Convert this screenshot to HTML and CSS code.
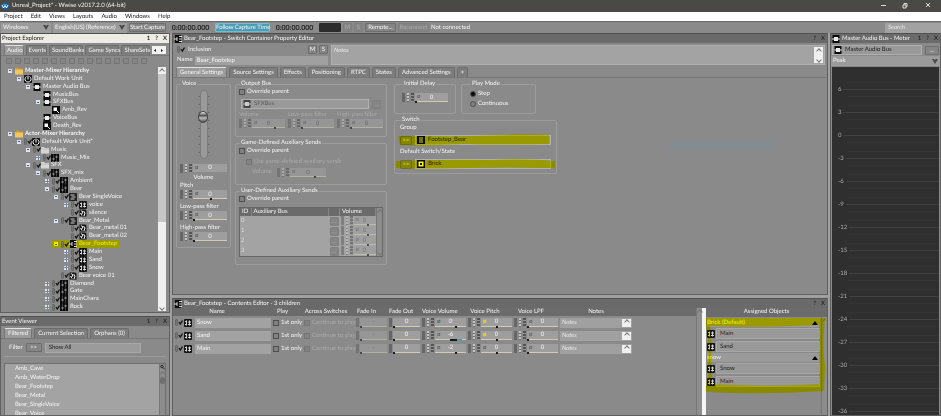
FILE: index.html
```
<!DOCTYPE html>
<html lang="en">

<head>
    <meta charset="UTF-8">
    <meta name="viewport" content="width=device-width, initial-scale=1.0">
    <title>Unreal_Project* - Wwise v2017.2.0 (64-bit)</title>
    <link rel="stylesheet" href="styles.css">
</head>

<body>
    <svg class="sprite" aria-hidden="true">
        <symbol id="logo" viewBox="0 0 16 16"><path d="M8 0l7 4v8l-7 4-7-4V4z" fill="#1761a8"/><path d="M2 6l3 6 3-5 3 5 3-6" fill="none" stroke="#fff" stroke-width="2"/><path d="M5 4l3 3 3-3" fill="none" stroke="#6cc5f5" stroke-width="2"/></symbol>
        <symbol id="folder" viewBox="0 0 16 14"><path d="M0 2l2-2h5l2 2h6v3H0z" fill="#c99a35"/><path d="M0 4h16v10H0z" fill="#efc75e"/></symbol>
        <symbol id="folder-v" viewBox="0 0 16 14"><path d="M0 1h6l2 2h8v11H0z" fill="#d5d5d5"/><path d="M0 5h16" stroke="#aaa"/></symbol>
        <symbol id="unit" viewBox="0 0 16 16"><rect width="16" height="16" rx="2" fill="#111"/><path d="M5 3a6 6 0 1 0 6 0M8 1v8" fill="none" stroke="#fff" stroke-width="2"/></symbol>
        <symbol id="bus" viewBox="0 0 16 16"><path d="M1 0h14v4H1zM1 12h14v4H1zM1 4h3v8H1zM12 4h3v8h-3z" fill="#0b0b0b"/><path d="M0 6h16v4H0z" fill="#888"/><rect x="4" y="4" width="8" height="8" fill="#eee"/></symbol>
        <symbol id="aux" viewBox="0 0 16 16"><rect width="16" height="16" fill="#0b0b0b"/><path d="M3 3h7v7H3z" fill="#fff"/><path d="M9 9l5 5" stroke="#fff" stroke-width="2"/></symbol>
        <symbol id="actor" viewBox="0 0 16 16"><rect width="16" height="16" fill="#0b0b0b"/><path d="M5 1v14M11 1v14" stroke="#777"/><path d="M3 10h4M9 6h4" stroke="#ccc" stroke-width="2"/></symbol>
        <symbol id="rand" viewBox="0 0 16 16"><rect width="16" height="16" rx="2" fill="#161616"/><path d="M5 3v10M11 3v10" fill="none" stroke="#ccc" stroke-width="2"/><path d="M2 5h3M2 11h3M8 6h6M8 11h6" stroke="#ddd" stroke-width="2"/></symbol>
        <symbol id="seq" viewBox="0 0 16 16"><rect width="16" height="16" rx="1" fill="#222"/><path d="M3 4h8M5 8h8M3 12h8" stroke="#ccc" stroke-width="2"/></symbol>
        <symbol id="switch" viewBox="0 0 16 16"><path d="M2 0h12v16H2z" fill="#0b0b0b"/><path d="M0 8h6M6 4v8M10 3h6M10 8h5M10 13h6" stroke="#ddd" stroke-width="2"/></symbol>
        <symbol id="sfx" viewBox="0 0 16 16"><path d="M1 1h12l2 3v11H1z" fill="#151515"/><path d="M4 3l4 3-3 5M9 4l3 4-2 6M3 8l3 5" fill="none" stroke="#fff" stroke-width="2"/></symbol>
        <symbol id="group" viewBox="0 0 16 16"><rect width="16" height="16" fill="#0b0b0b"/><path d="M6 2v12M10 2v12" stroke="#ddd" stroke-width="2"/></symbol>
        <symbol id="state" viewBox="0 0 16 16"><rect width="16" height="16" fill="#0b0b0b"/><path d="M3 3h10v10H3z" fill="#fff"/><path d="M6 6h4v4H6z" fill="#111"/></symbol>
    </svg>

    <div class="title-bar">
        <svg class="icon"><use href="#logo"/></svg>
        <span>Unreal_Project* - Wwise v2017.2.0 (64-bit)</span>
        <svg class="window-buttons" viewBox="0 0 60 12"><path d="M0 5.500h5M22 5h3v3h-3zM23 5V3.500h3v3h-1M45 3l4 4M49 3l-4 4" fill="none" stroke="#ddd"/></svg>
    </div>
    <nav class="menu">
        <a href="#">Project</a><a href="#">Edit</a><a href="#">Views</a><a href="#">Layouts</a><a href="#">Audio</a><a href="#">Windows</a><a href="#">Help</a>
    </nav>
    <div class="toolbar">
        <select class="platform" aria-label="Platform"><option>Windows</option></select>
        <select class="language" aria-label="Language"><option>English(US) (Reference)</option></select>
        <button class="btn capture">Start Capture</button>
        <span class="time">0:00:00.000</span>
        <button class="btn follow">Follow Capture Time</button>
        <span class="time">0:00:00.000</span>
        <span class="screen"></span>
        <button class="btn square" disabled>M</button>
        <button class="btn square" disabled>S</button>
        <button class="btn remote">Remote...</button>
        <button class="btn remote" disabled>Reconnect</button>
        <span>Not connected</span>
        <input class="search" type="text" placeholder="Search" aria-label="Search">
    </div>

    <div class="workspace">
        <div class="left">
            <section class="panel explorer">
                <header class="panel-head active"><span>Project Explorer</span><span class="tools"><b>1</b><b>?</b><b>X</b></span></header>
                <div class="tabs">
                    <button class="tab on">Audio</button><button class="tab">Events</button><button class="tab">SoundBanks</button><button class="tab">Game Syncs</button><button class="tab">ShareSets</button><button class="scroll-tabs" aria-label="Scroll tabs"><svg viewBox="0 0 13 7"><path d="M4 2v3L2 3.500zM9 2v3l2-1.500z" fill="#111"/></svg></button>
                </div>
                <div class="tool-icons"><i></i><i></i><i></i><i></i><i></i><i></i><i></i><i></i><i></i><i></i><i></i><i></i><i></i><i></i><i></i><i></i></div>
                <div class="tree-box">
                    <ul class="tree">
                        <li class="l0 minus root"><svg class="icon"><use href="#folder"/></svg>Master-Mixer Hierarchy</li>
                        <li class="l1 minus"><svg class="icon"><use href="#unit"/></svg>Default Work Unit</li>
                        <li class="l2 minus"><svg class="icon"><use href="#bus"/></svg>Master Audio Bus</li>
                        <li class="l3"><svg class="icon"><use href="#bus"/></svg>MusicBus</li>
                        <li class="l3 minus"><svg class="icon"><use href="#bus"/></svg>SFXBus</li>
                        <li class="l4"><svg class="icon"><use href="#aux"/></svg>Amb_Rev</li>
                        <li class="l3"><svg class="icon"><use href="#bus"/></svg>VoiceBus</li>
                        <li class="l3"><svg class="icon"><use href="#aux"/></svg>Death_Rev</li>
                        <li class="l0 minus root"><svg class="icon"><use href="#folder"/></svg>Actor-Mixer Hierarchy</li>
                        <li class="l1 minus"><input type="checkbox" checked aria-label="Include"><svg class="icon"><use href="#unit"/></svg>Default Work Unit*</li>
                        <li class="l2 minus"><input type="checkbox" checked aria-label="Include"><svg class="icon"><use href="#folder-v"/></svg>Music</li>
                        <li class="l3 plus"><input type="checkbox" checked aria-label="Include"><svg class="icon"><use href="#actor"/></svg>Music_Mix</li>
                        <li class="l2 minus"><input type="checkbox" checked aria-label="Include"><svg class="icon"><use href="#folder-v"/></svg>SFX</li>
                        <li class="l3 minus"><input type="checkbox" checked aria-label="Include"><svg class="icon"><use href="#actor"/></svg>SFX_mix</li>
                        <li class="l4 plus"><input type="checkbox" checked aria-label="Include"><svg class="icon"><use href="#actor"/></svg>Ambient</li>
                        <li class="l4 minus"><input type="checkbox" checked aria-label="Include"><svg class="icon"><use href="#actor"/></svg>Bear</li>
                        <li class="l5 minus"><input type="checkbox" checked aria-label="Include"><svg class="icon"><use href="#seq"/></svg>Bear SingleVoice</li>
                        <li class="l6 plus"><input type="checkbox" checked aria-label="Include"><svg class="icon"><use href="#rand"/></svg>voice</li>
                        <li class="l6"><input type="checkbox" checked aria-label="Include"><svg class="icon"><use href="#sfx"/></svg>silence</li>
                        <li class="l5 minus"><input type="checkbox" checked aria-label="Include"><svg class="icon"><use href="#seq"/></svg>Bear_Metal</li>
                        <li class="l6"><input type="checkbox" checked aria-label="Include"><svg class="icon"><use href="#sfx"/></svg>Bear_metal 01</li>
                        <li class="l6"><input type="checkbox" checked aria-label="Include"><svg class="icon"><use href="#sfx"/></svg>Bear_metal 02</li>
                        <li class="l5 minus marked"><input type="checkbox" checked aria-label="Include"><svg class="icon"><use href="#switch"/></svg>Bear_Footstep</li>
                        <li class="l6 plus"><input type="checkbox" checked aria-label="Include"><svg class="icon"><use href="#rand"/></svg>Main</li>
                        <li class="l6 plus"><input type="checkbox" checked aria-label="Include"><svg class="icon"><use href="#rand"/></svg>Sand</li>
                        <li class="l6 plus"><input type="checkbox" checked aria-label="Include"><svg class="icon"><use href="#rand"/></svg>Snow</li>
                        <li class="l5"><input type="checkbox" checked aria-label="Include"><svg class="icon"><use href="#sfx"/></svg>Bear voice 01</li>
                        <li class="l4 plus"><input type="checkbox" checked aria-label="Include"><svg class="icon"><use href="#actor"/></svg>Diamond</li>
                        <li class="l4 plus"><input type="checkbox" checked aria-label="Include"><svg class="icon"><use href="#actor"/></svg>Gate</li>
                        <li class="l4 plus"><input type="checkbox" checked aria-label="Include"><svg class="icon"><use href="#actor"/></svg>MainChara</li>
                        <li class="l4 plus"><input type="checkbox" checked aria-label="Include"><svg class="icon"><use href="#actor"/></svg>Rock</li>
                    </ul>
                    <div class="scroll light"><span class="arrow up"></span><span class="thumb"></span><span class="arrow down"></span></div>
                </div>
            </section>

            <section class="panel events">
                <header class="panel-head"><span>Event Viewer</span><span class="tools"><b>1</b><b>?</b><b>X</b></span></header>
                <div class="tabs">
                    <button class="tab on">Filtered</button><button class="tab">Current Selection</button><button class="tab">Orphans (0)</button>
                </div>
                <div class="filter">
                    <label for="filter">Filter</label>
                    <button class="btn">&gt;&gt;</button>
                    <input id="filter" type="text" value="Show All">
                </div>
                <div class="event-box">
                    <ul class="event-list">
                        <li>Amb_Cave</li>
                        <li>Amb_WaterDrop</li>
                        <li>Bear_Footstep</li>
                        <li>Bear_Metal</li>
                        <li>Bear_SingleVoice</li>
                        <li>Bear_Voice</li>
                    </ul>
                    <div class="scroll dark"><svg class="find" viewBox="0 0 6 6"><circle cx="2.500" cy="2.500" r="1.500" fill="none" stroke="#111"/><path d="M4 4l2 2" stroke="#111"/></svg><span class="arrow up"></span><span class="thumb"></span></div>
                </div>
            </section>
        </div>

        <div class="middle">
            <section class="panel property">
                <header class="panel-head"><svg class="icon"><use href="#switch"/></svg><span>Bear_Footstep - Switch Container Property Editor</span><span class="tools"><b>?</b><b>X</b></span></header>
                <div class="identity">
                    <div class="naming">
                        <div class="line">
                            <label class="check"><input type="checkbox" checked>Inclusion</label>
                            <button class="btn square push">M</button>
                            <button class="btn square">S</button>
                        </div>
                        <div class="line">
                            <label for="name">Name</label>
                            <input id="name" type="text" value="Bear_Footstep">
                        </div>
                    </div>
                    <div class="notes">
                        <textarea placeholder="Notes" aria-label="Notes"></textarea>
                        <div class="spin"><span class="arrow up"></span><span class="arrow down"></span></div>
                    </div>
                </div>
                <div class="tabs">
                    <button class="tab on">General Settings</button><button class="tab">Source Settings</button><button class="tab">Effects</button><button class="tab">Positioning</button><button class="tab">RTPC</button><button class="tab">States</button><button class="tab">Advanced Settings</button><button class="tab">+</button>
                </div>
                <div class="settings">
                    <fieldset class="voice">
                        <legend>Voice</legend>
                        <div class="fader"><input type="range" min="0" max="100" value="64" aria-label="Voice volume"></div>
                        <span class="num first"><input id="volume" type="text" value="0"></span>
                        <label class="centered" for="volume">Volume</label>
                        <label for="pitch">Pitch</label>
                        <span class="num bar mid"><input id="pitch" type="text" value="0"></span>
                        <label for="lpf">Low-pass filter</label>
                        <span class="num bar"><input id="lpf" type="text" value="0"></span>
                        <label for="hpf">High-pass filter</label>
                        <span class="num bar"><input id="hpf" type="text" value="0"></span>
                    </fieldset>
                    <div class="sends">
                        <fieldset class="output">
                            <legend>Output Bus</legend>
                            <label class="check"><input type="checkbox">Override parent</label>
                            <div class="object dim"><span class="object-name"><svg class="icon"><use href="#bus"/></svg><input type="text" value="SFXBus" aria-label="Output bus" disabled></span><button class="btn" disabled>...</button></div>
                            <div class="three dim">
                                <label>Volume<span class="num bar far"><input type="text" value="0" disabled></span></label>
                                <label>Low-pass filter<span class="num bar"><input type="text" value="0" disabled></span></label>
                                <label>High-pass filter<span class="num bar"><input type="text" value="0" disabled></span></label>
                            </div>
                        </fieldset>
                        <fieldset class="game">
                            <legend>Game-Defined Auxiliary Sends</legend>
                            <label class="check"><input type="checkbox">Override parent</label>
                            <label class="check nested dim"><input type="checkbox" disabled>Use game-defined auxiliary sends</label>
                            <label class="inline-num dim">Volume<span class="num bar far"><input type="text" value="0" disabled></span></label>
                        </fieldset>
                        <fieldset class="user">
                            <legend>User-Defined Auxiliary Sends</legend>
                            <label class="check"><input type="checkbox">Override parent</label>
                            <div class="aux-box">
                                <table class="aux">
                                    <thead><tr><th class="id">ID</th><th>Auxiliary Bus</th><th class="more"></th><th class="vol">Volume</th></tr></thead>
                                    <tbody>
                                        <tr><td>0</td><td></td><td><button class="btn" disabled>...</button></td><td class="dim"><span class="num bar far"><input type="text" value="0" aria-label="Volume 0" disabled></span></td></tr>
                                        <tr><td>1</td><td></td><td><button class="btn" disabled>...</button></td><td class="dim"><span class="num bar far"><input type="text" value="0" aria-label="Volume 1" disabled></span></td></tr>
                                        <tr><td>2</td><td></td><td><button class="btn" disabled>...</button></td><td class="dim"><span class="num bar far"><input type="text" value="0" aria-label="Volume 2" disabled></span></td></tr>
                                        <tr><td>3</td><td></td><td><button class="btn" disabled>...</button></td><td class="dim"><span class="num bar far"><input type="text" value="0" aria-label="Volume 3" disabled></span></td></tr>
                                    </tbody>
                                </table>
                                <div class="scroll dark"><span class="arrow up"></span><span class="arrow down"></span></div>
                            </div>
                        </fieldset>
                    </div>
                    <div class="playback">
                        <div class="pair">
                            <fieldset class="delay">
                                <legend>Initial Delay</legend>
                                <span class="num bar"><input type="text" value="0" aria-label="Initial delay"></span>
                            </fieldset>
                            <fieldset class="mode">
                                <legend>Play Mode</legend>
                                <label class="check"><input type="radio" name="mode" checked>Step</label>
                                <label class="check"><input type="radio" name="mode">Continuous</label>
                            </fieldset>
                        </div>
                        <fieldset class="switch">
                            <legend>Switch</legend>
                            <label for="group-name">Group</label>
                            <div class="object marker">
                                <button class="btn">&gt;&gt;</button>
                                <span class="object-name"><svg class="icon"><use href="#group"/></svg><input id="group-name" type="text" value="Footstep_Bear"></span>
                                <svg class="ink" viewBox="0 0 160 12" preserveAspectRatio="none"><path d="M2 2Q60 3 110 1Q130 0 154 1V10Q100 11 70 10Q30 12 4 11Z"/></svg>
                            </div>
                            <label for="state-name">Default Switch/State</label>
                            <div class="object marker">
                                <button class="btn">&gt;&gt;</button>
                                <span class="object-name"><svg class="icon"><use href="#state"/></svg><input id="state-name" type="text" value="Brick"></span>
                                <svg class="ink" viewBox="0 0 160 12" preserveAspectRatio="none"><path d="M0 3Q60 1 95 2Q130 0 160 3V10Q110 9 70 10Q30 11 0 10Z"/></svg>
                            </div>
                        </fieldset>
                    </div>
                    <div class="ghost"></div>
                </div>
            </section>

            <section class="panel contents">
                <header class="panel-head"><svg class="icon"><use href="#switch"/></svg><span>Bear_Footstep - Contents Editor - 3 children</span><span class="tools"><b>?</b><b>X</b></span></header>
                <div class="contents-body">
                    <div class="children">
                        <table class="child-table">
                            <thead>
                                <tr><th class="c-name">Name</th><th class="c-play">Play</th><th class="c-across">Across Switches</th><th class="c-fade">Fade In</th><th class="c-fade">Fade Out</th><th class="c-voice">Voice Volume</th><th class="c-voice">Voice Pitch</th><th class="c-voice">Voice LPF</th><th class="c-notes">Notes</th><th></th></tr>
                            </thead>
                            <tbody>
                                <tr>
                                    <td><div class="child"><input type="checkbox" checked aria-label="Include Snow"><svg class="icon"><use href="#rand"/></svg><input type="text" value="Snow" aria-label="Name"></div></td>
                                    <td><label class="check"><input type="checkbox">1st only</label></td>
                                    <td><label class="check dim"><input type="checkbox" disabled>Continue to play</label></td>
                                    <td class="dim"><span class="num short bar"><input type="text" value="-" aria-label="Fade in" disabled></span></td>
                                    <td><span class="num short bar"><input type="text" value="0" aria-label="Fade out"></span></td>
                                    <td><span class="num bar far"><input type="text" value="0" aria-label="Voice volume"></span></td>
                                    <td><span class="num bar mid lit"><input type="text" value="0" aria-label="Voice pitch"></span></td>
                                    <td><span class="num bar"><input type="text" value="0" aria-label="Voice LPF"></span></td>
                                    <td><div class="note"><input type="text" placeholder="Notes" aria-label="Notes"><span class="spin"><span class="arrow up"></span></span></div></td>
                                    <td></td>
                                </tr>
                                <tr>
                                    <td><div class="child"><input type="checkbox" checked aria-label="Include Sand"><svg class="icon"><use href="#rand"/></svg><input type="text" value="Sand" aria-label="Name"></div></td>
                                    <td><label class="check"><input type="checkbox">1st only</label></td>
                                    <td><label class="check dim"><input type="checkbox" disabled>Continue to play</label></td>
                                    <td class="dim"><span class="num short bar"><input type="text" value="-" aria-label="Fade in" disabled></span></td>
                                    <td><span class="num short bar"><input type="text" value="0" aria-label="Fade out"></span></td>
                                    <td><span class="num bar mid blue"><input type="text" value="-6" aria-label="Voice volume"></span></td>
                                    <td><span class="num bar mid lit"><input type="text" value="0" aria-label="Voice pitch"></span></td>
                                    <td><span class="num bar"><input type="text" value="0" aria-label="Voice LPF"></span></td>
                                    <td><div class="note"><input type="text" placeholder="Notes" aria-label="Notes"><span class="spin"><span class="arrow up"></span></span></div></td>
                                    <td></td>
                                </tr>
                                <tr>
                                    <td><div class="child"><input type="checkbox" checked aria-label="Include Main"><svg class="icon"><use href="#rand"/></svg><input type="text" value="Main" aria-label="Name"></div></td>
                                    <td><label class="check"><input type="checkbox">1st only</label></td>
                                    <td><label class="check dim"><input type="checkbox" disabled>Continue to play</label></td>
                                    <td class="dim"><span class="num short bar"><input type="text" value="-" aria-label="Fade in" disabled></span></td>
                                    <td><span class="num short bar"><input type="text" value="0" aria-label="Fade out"></span></td>
                                    <td><span class="num bar far"><input type="text" value="-2" aria-label="Voice volume"></span></td>
                                    <td><span class="num bar mid"><input type="text" value="0" aria-label="Voice pitch"></span></td>
                                    <td><span class="num bar"><input type="text" value="0" aria-label="Voice LPF"></span></td>
                                    <td><div class="note"><input type="text" placeholder="Notes" aria-label="Notes"><span class="spin"><span class="arrow up"></span></span></div></td>
                                    <td></td>
                                </tr>
                            </tbody>
                        </table>
                        <div class="scroll dark"><span class="arrow up"></span></div>
                    </div>
                    <div class="assigned">
                        <h2>Assigned Objects</h2>
                        <div class="assigned-body">
                            <div class="assigned-list">
                                <h3>Brick (Default)<svg viewBox="0 0 6 4"><path d="M0 4l3-4 3 4z"/></svg></h3>
                                <div class="assigned-item"><svg class="icon"><use href="#rand"/></svg><span>Main</span></div>
                                <div class="assigned-item"><svg class="icon"><use href="#rand"/></svg><span>Sand</span></div>
                                <h3>snow<svg viewBox="0 0 6 4"><path d="M0 4l3-4 3 4z"/></svg></h3>
                                <div class="assigned-item"><svg class="icon"><use href="#rand"/></svg><span>Snow</span></div>
                                <div class="assigned-item"><svg class="icon"><use href="#rand"/></svg><span>Main</span></div>
                            </div>
                            <div class="scroll dark"><span class="arrow up"></span></div>
                            <svg class="ink" viewBox="0 0 120 80" preserveAspectRatio="none"><path d="M0 1H118Q115 30 118 50L117 75Q60 79 0 76V68Q4 60 2 45Q4 25 0 9ZM4 9Q6 30 5 45L6 68Q60 71 112 68Q113 30 112 8Q50 11 4 9Z" fill-rule="evenodd"/></svg>
                        </div>
                    </div>
                </div>
            </section>
        </div>

        <section class="panel meter">
            <header class="panel-head"><svg class="icon"><use href="#bus"/></svg><span>Master Audio Bus - Meter</span><span class="tools"><b>1</b><b>?</b><b>X</b></span></header>
            <div class="object"><span class="object-name"><svg class="icon"><use href="#bus"/></svg><input type="text" value="Master Audio Bus" aria-label="Metered bus"></span><button class="btn">...</button></div>
            <select aria-label="Meter type"><option>Peak</option></select>
            <div class="scale">
                <span>6</span><span>3</span><span>0</span><span>-3</span><span>-6</span><span>-9</span><span>-12</span><span>-15</span><span>-18</span><span>-21</span><span>-24</span><span>-27</span><span>-30</span><span>-33</span><span>-36</span>
            </div>
        </section>
    </div>
</body>

</html>
```

FILE: styles.css
```
* {
    margin: 0;
    padding: 0;
    box-sizing: border-box;
}

body {
    display: flex;
    flex-direction: column;
    height: 100vh;
    overflow: hidden;
    background: #8a8a8a;
    color: #f4f4f4;
    font: 6px/8px Lato, "Liberation Sans", sans-serif;
    text-rendering: geometricPrecision;
}

input,
select,
textarea,
button {
    font: inherit;
    color: inherit;
    text-rendering: inherit;
    border: none;
    outline: none;
    min-width: 0;
}

.sprite {
    position: absolute;
    width: 0;
    height: 0;
}

.icon {
    width: 8px;
    height: 8px;
    flex: none;
}

/* window chrome */
.title-bar {
    display: flex;
    align-items: center;
    gap: 3px;
    height: 12px;
    padding-left: 1px;
    background: #4b4946;
    flex: none;
}

.window-buttons {
    width: 60px;
    height: 12px;
    margin-left: auto;
}

.menu {
    display: flex;
    align-items: center;
    gap: 8px;
    height: 9px;
    padding-left: 4px;
    background: #fff;
    flex: none;
}

.menu a {
    color: #222;
    text-decoration: none;
}

.toolbar {
    display: flex;
    align-items: center;
    gap: 2px;
    height: 12px;
    padding-left: 1px;
    border-top: 1px solid #6b6b6b;
    flex: none;
}

select {
    appearance: none;
    height: 10px;
    padding: 0 2px;
    background: url("data:image/svg+xml,%3Csvg xmlns='http://www.w3.org/2000/svg' viewBox='0 0 6 5'%3E%3Cpath d='M0 0h2l1 1 1-1h2L3 5z' fill='%23484848'/%3E%3C/svg%3E") right 2px center / 6px 5px no-repeat, #9b9b9b;
}

.platform {
    width: 50px;
}

.language {
    width: 74px;
}

.btn {
    height: 9px;
    padding: 0 2px;
    background: #858585;
    border: 1px solid #6e6e6e;
    border-radius: 1px;
    line-height: 7px;
    text-align: center;
    white-space: nowrap;
    flex: none;
}

.btn:disabled {
    color: #aaa;
    border-color: #7f7f7f;
}

.capture {
    width: 37px;
    padding: 0;
}

.follow {
    width: 55px;
    padding: 0;
    background: #4b9db6;
    border-color: #75bace;
}

.square {
    width: 9px;
    padding: 0;
}

.remote {
    width: 31px;
    padding: 0;
}

.time {
    width: 45px;
    color: #222;
    font-size: 7px;
    font-weight: bold;
    text-align: center;
}

.screen {
    width: 22px;
    height: 9px;
    background: #2c2c2c;
    border-radius: 1px;
}

.search {
    width: 56px;
    height: 10px;
    margin-left: auto;
    padding-left: 3px;
    background: #a2a2a2;
}

::placeholder {
    color: #e8e8e8;
    font-style: italic;
}

/* panels */
.workspace {
    display: flex;
    flex: 1;
    gap: 2px;
    min-height: 0;
    background: #a0a0a0;
}

.left {
    display: flex;
    flex-direction: column;
    gap: 3px;
    width: 170px;
    flex: none;
}

.middle {
    display: flex;
    flex-direction: column;
    gap: 3px;
    flex: 1;
    min-width: 0;
}

.panel {
    display: flex;
    flex-direction: column;
    background: #8a8a8a;
    border: 1px solid #606060;
    border-width: 0 1px 1px;
}

.panel-head {
    display: flex;
    align-items: center;
    gap: 2px;
    height: 10px;
    padding: 0 2px 0 1px;
    background: #6a6a6a;
    border-top: 1px solid #505050;
    flex: none;
}

.panel-head.active {
    background: #ecebe4;
    color: #222;
}

.tools {
    display: flex;
    gap: 5px;
    margin-left: auto;
    color: #2b2b2b;
}

.tabs {
    display: flex;
    align-items: flex-end;
    gap: 2px;
    height: 13px;
    padding: 0 3px;
    border-bottom: 1px solid #777;
    flex: none;
}

.tab {
    height: 10px;
    padding: 0 3px;
    background: #7d7d7d;
    border: 1px solid #6c6c6c;
    border-width: 1px 1px 0;
    border-radius: 2px 2px 0 0;
    white-space: nowrap;
}

.explorer .tab {
    padding: 0 2px;
}

.tab.on {
    background: #9b9b9b;
    border-color: #e0e0e0 #777 #777;
}

.scroll-tabs {
    width: 14px;
    height: 8px;
    margin: 0 0 1px auto;
    background: #f2f2f2;
    flex: none;
}

.scroll-tabs svg {
    display: block;
    width: 13px;
    height: 7px;
}

.explorer {
    flex: 1;
    min-height: 0;
}

.tool-icons {
    display: flex;
    gap: 3px;
    height: 10px;
    padding: 2px 5px;
    flex: none;
}

.tool-icons i {
    width: 6px;
    height: 6px;
    background: #858585;
    border: 1px solid #757575;
}

.tree-box {
    display: flex;
    flex: 1;
    min-height: 0;
    padding: 1px 3px 1px 0;
}

.tree {
    display: flex;
    flex-direction: column;
    flex: 1;
    list-style: none;
    min-height: 0;
}

.tree li {
    display: flex;
    align-items: center;
    gap: 2px;
    flex: 1 1 0;
    min-height: 0;
    white-space: nowrap;
}

.tree li::before {
    content: "";
    width: 4px;
    height: 4px;
    margin-right: 1px;
    flex: none;
}

.tree .minus::before,
.tree .plus::before {
    background: linear-gradient(#46598a, #46598a) center / 2px 1px no-repeat, #dfe3ee;
}

.tree .plus::before {
    background: linear-gradient(#7182ac, #7182ac) center / 4px 1px no-repeat, linear-gradient(#7182ac, #7182ac) center / 1px 4px no-repeat, #dfe3ee;
}

.l0 { padding-left: 7px; }
.l1 { padding-left: 16px; }
.l2 { padding-left: 25px; }
.l3 { padding-left: 35px; }
.l4 { padding-left: 44px; }
.l5 { padding-left: 53px; }
.l6 { padding-left: 63px; }

.tree .root {
    font-weight: bold;
}

.tree .marked {
    background: linear-gradient(#9c9b00, #9c9b00) 50px 0 / 69px 100% no-repeat;
    color: #f1f000;
}

.tree .marked::before {
    background-color: #f1f000;
}

/* check boxes with the link handle on their left */
.tree input,
.child input[type="checkbox"],
.identity input[type="checkbox"] {
    appearance: none;
    width: 8px;
    height: 7px;
    margin-right: -2px;
    background: url("data:image/svg+xml,%3Csvg xmlns='http://www.w3.org/2000/svg' viewBox='0 0 8 7'%3E%3Crect x='.5' y='.5' width='2' height='6' rx='1' fill='%23777' stroke='%23555' stroke-width='.6'/%3E%3Cpath d='M4 3l1.300 2L7.500 1.500' fill='none' stroke='%23111' stroke-width='1.300'/%3E%3C/svg%3E") no-repeat;
    flex: none;
}

.identity input[type="checkbox"] {
    margin-right: 1px;
}

.scroll {
    display: flex;
    flex-direction: column;
    align-items: center;
    flex: none;
    width: 8px;
}

.scroll .thumb {
    width: 100%;
    height: 148px;
}

.scroll.light {
    background: #f0f0f0;
}

.scroll.light .thumb {
    background: #c6c6c6;
}

.scroll.dark {
    width: 6px;
    background: #8d8d8d;
    border-left: 1px solid #777;
}

.scroll.dark .thumb {
    height: 7px;
    background: #707070;
    border-radius: 3px;
}

.find {
    width: 5px;
    height: 6px;
    flex: none;
}

.arrow {
    display: flex;
    align-items: center;
    justify-content: center;
    width: 6px;
    height: 7px;
    flex: none;
}

.arrow::before {
    content: "";
    width: 3px;
    height: 3px;
    border: solid #777;
    border-width: 1px 0 0 1px;
    transform: rotate(45deg);
}

.arrow.down {
    margin-top: auto;
}

.arrow.down::before {
    transform: rotate(225deg);
}

/* event viewer */
.events {
    height: 100px;
    flex: none;
}

.filter {
    display: flex;
    align-items: center;
    gap: 3px;
    height: 18px;
    margin: 0 3px;
    padding: 0 5px;
    border-bottom: 1px solid #9b9b9b;
    flex: none;
}

.filter .btn {
    width: 16px;
}

.filter input {
    width: 96px;
    height: 10px;
    padding-left: 3px;
    background: #9b9b9b;
    border: 1px solid #a8a8a8;
    color: #222;
}

.event-box {
    display: flex;
    flex: 1;
    min-height: 0;
    margin: 6px 3px 0;
    background: #a3a3a3;
    border: 1px solid #6e6e6e;
    border-bottom: none;
    overflow: hidden;
}

.event-list {
    flex: 1;
    padding-left: 10px;
    list-style: none;
    line-height: 9px;
}

/* property editor */
.property {
    flex: 1;
    min-height: 0;
}

.identity {
    display: flex;
    gap: 3px;
    height: 22px;
    padding: 2px 2px 0 4px;
    flex: none;
}

.naming {
    display: flex;
    flex-direction: column;
    gap: 1px;
    width: 151px;
}

.line {
    display: flex;
    align-items: center;
    gap: 2px;
    height: 10px;
}

.push {
    margin-left: auto;
}

#name {
    flex: 1;
    height: 9px;
    padding-left: 2px;
    background: #a0a0a0;
}

.notes {
    display: flex;
    flex: 1;
    background: #a3a3a3;
    border: 1px solid #b0b0b0;
}

.notes textarea {
    flex: 1;
    padding: 1px 2px;
    background: none;
    resize: none;
}

.spin {
    display: flex;
    flex-direction: column;
    width: 9px;
    margin: 1px;
    background: #f0f0f0;
}

.spin .arrow {
    width: 9px;
}

.settings {
    position: relative;
    display: flex;
    align-items: flex-start;
    gap: 4px;
    flex: 1;
    min-height: 0;
    margin: 0 1px;
    padding: 2px;
}

fieldset {
    display: flex;
    flex-direction: column;
    min-width: 0;
    padding: 0 3px;
    border: 1px solid #9c9c9c;
    border-radius: 2px;
}

legend {
    margin-left: 1px;
    padding: 0 1px;
}

.check {
    display: flex;
    align-items: center;
    gap: 2px;
    white-space: nowrap;
}

.check input[type="checkbox"]:not(:checked),
.check input[type="radio"] {
    appearance: none;
    width: 6px;
    height: 6px;
    background: #828282;
    border: 1px solid #4f4f4f;
    flex: none;
}

.check input[type="radio"] {
    border-radius: 50%;
}

.check input[type="radio"]:checked {
    background: #0a0a0a;
}

.dim,
.aux .dim {
    color: #aaa;
}

.check.dim input[type="checkbox"] {
    border-color: #757575;
}

.dim .num,
.dim .icon {
    opacity: .6;
}

.dim input {
    color: #555;
}

/* numeric field: handle, slider mark, property box, value */
.num {
    position: relative;
    display: flex;
    align-items: flex-start;
    height: 10px;
    padding-left: 13px;
    background: linear-gradient(#666, #666) 0 0 / 3px 9px no-repeat, repeating-linear-gradient(#c4c4c4 0 2px, #707070 2px 3px) 5px 0 / 2px 9px no-repeat, repeating-linear-gradient(#555 0 2px, #909090 2px 3px) 9px 0 / 3px 9px no-repeat;
}

.num input {
    width: 100%;
    height: 8px;
    background: #9e9e9e;
    text-align: center;
    line-height: 8px;
}

.num::after {
    content: "ø";
    position: absolute;
    left: 15px;
    top: 0;
    color: #555;
}

.num.lit::after {
    color: #f2e200;
    font-weight: bold;
}

.num.bar input {
    height: 9px;
    border-bottom: 1px solid #cfccb4;
}

.num.bar::before {
    content: "";
    position: absolute;
    left: 13px;
    bottom: 0;
    width: 2px;
    height: 2px;
    background: #1a1a1a;
}

.num.mid::before {
    left: 64%;
}

.num.far::before {
    left: 76%;
}

.num.blue::before {
    border-right: 5px solid #4f9cb2;
    width: 7px;
}

.num.short {
    padding-left: 4px;
    background: linear-gradient(#666, #666) 0 0 / 3px 9px no-repeat;
}

.num.short::after {
    content: none;
}

.num.short::before {
    left: 4px;
}

.voice {
    width: 55px;
    height: 168px;
}

.voice .num {
    margin-bottom: 3px;
}

.voice .first {
    margin-bottom: 0;
}

.voice .centered {
    text-align: center;
}

.fader {
    display: flex;
    justify-content: center;
    height: 76px;
    padding: 2px 0 5px;
    background: repeating-linear-gradient(#6e6e6e 0 1px, transparent 1px 8px) center 8px / 12px 58px no-repeat;
    flex: none;
}

.fader input {
    appearance: none;
    writing-mode: vertical-lr;
    direction: rtl;
    width: 8px;
    height: 69px;
    background: #9a9a9a;
    border: 1px solid #7b7b7b;
    border-radius: 4px;
}

.fader input::-webkit-slider-thumb {
    appearance: none;
    width: 10px;
    height: 12px;
    margin-left: -2px;
    background: linear-gradient(#eee, #555 35%, #bbb 60%, #555);
    border: 1px solid #444;
    border-radius: 50%;
}

.sends {
    display: flex;
    flex-direction: column;
    gap: 2px;
    width: 152px;
}

.output {
    height: 57px;
}

.game {
    height: 46px;
}

.user {
    height: 78px;
}

.object {
    position: relative;
    display: flex;
    align-items: center;
    gap: 3px;
    height: 10px;
}

.object-name {
    display: flex;
    flex: 1;
    align-items: center;
    gap: 3px;
    height: 10px;
    padding-left: 1px;
    background: #999;
    border: 1px solid #b0b0b0;
}

.object-name input {
    flex: 1;
    height: 8px;
    background: none;
    color: #222;
}

.dim .object-name input {
    color: #5e5e5e;
}

.output .object {
    margin: 3px 2px 2px;
}

.output .object .btn {
    width: 9px;
    padding: 0;
}

.three {
    display: flex;
    gap: 3px;
}

.three label {
    flex: 1 1 0;
    min-width: 0;
    white-space: nowrap;
}

.nested {
    margin: 3px 7px 2px;
}

.inline-num {
    display: flex;
    gap: 5px;
    padding-left: 13px;
}

.inline-num .num {
    width: 49px;
}

.aux-box {
    display: flex;
    margin-top: 4px;
    background: #a3a3a3;
    border: 1px solid #666;
}

.aux {
    width: 100%;
    border-collapse: collapse;
    table-layout: fixed;
}

th {
    height: 8px;
    background: #6b6b6b;
    font-weight: normal;
    white-space: nowrap;
}

.aux th {
    text-align: left;
    padding-left: 2px;
    border-right: 1px solid #858585;
}

.aux td {
    height: 10px;
    color: #ddd;
    padding-left: 1px;
}

.aux .btn {
    display: block;
    width: 9px;
    padding: 0;
}

.aux .id { width: 11px; }
.aux .more { width: 11px; }
.aux .vol { width: 36px; }

.playback {
    display: flex;
    flex-direction: column;
    gap: 2px;
    width: 163px;
    margin-left: 3px;
}

.pair {
    display: flex;
    gap: 5px;
}

.delay {
    width: 62px;
    height: 34px;
    padding: 5px 7px;
}

.mode {
    width: 75px;
    height: 34px;
    gap: 2px;
    padding: 2px 8px;
}

.switch {
    height: 58px;
    gap: 3px;
    padding: 0 5px;
}

.switch .btn {
    width: 12px;
    padding: 0;
}

.ink {
    position: absolute;
    left: -4px;
    top: -1px;
    width: calc(100% + 8px);
    height: 12px;
    fill: #ffff00;
    mix-blend-mode: multiply;
    pointer-events: none;
}

.ghost {
    position: absolute;
    left: 495px;
    top: 61px;
    width: 107px;
    height: 12px;
    background: #858c8f;
}

/* contents editor */
.contents {
    height: 118px;
    flex: none;
}

.contents-body {
    display: flex;
    flex: 1;
    min-height: 0;
}

.children {
    display: flex;
    align-items: flex-start;
    flex: 1;
    min-width: 0;
    border-right: 4px solid #f4f4f4;
}

.children .scroll {
    align-self: stretch;
}

.child-table {
    width: 100%;
    border-collapse: collapse;
    table-layout: fixed;
}

.child-table th {
    padding-right: 12px;
}

.child-table .c-across {
    padding-right: 8px;
}

.child-table .c-notes {
    padding-right: 2px;
}

.child-table td {
    height: 13px;
    padding-right: 2px;
}

.c-name { width: 100px; }
.c-play { width: 31px; }
.c-across { width: 52px; }
.c-fade { width: 33px; }
.c-voice { width: 46px; }
.c-notes { width: 74px; }

.child,
.note {
    display: flex;
    align-items: center;
    gap: 3px;
    height: 10px;
    padding-left: 2px;
}

.child input[type="text"] {
    flex: 1;
    height: 10px;
    padding-left: 2px;
    background: #a2a2a2;
}

.note {
    background: #a0a0a0;
}

.note input {
    flex: 1;
    background: none;
}

.note .spin {
    height: 8px;
}

.assigned {
    display: flex;
    flex-direction: column;
    width: 121px;
    flex: none;
}

.assigned h2 {
    height: 9px;
    background: #6b6b6b;
    font: inherit;
    text-align: center;
    flex: none;
}

.assigned-body {
    position: relative;
    display: flex;
    flex: 1;
}

.assigned-list {
    flex: 1;
    padding: 1px 1px 0;
}

.assigned h3 {
    display: flex;
    align-items: center;
    justify-content: space-between;
    height: 9px;
    padding-right: 2px;
    background: #9a9a9a;
    font: inherit;
}

.assigned h3 svg {
    width: 6px;
    height: 4px;
}

.assigned-item {
    display: flex;
    align-items: center;
    gap: 1px;
    height: 13px;
    color: #222;
}

.assigned-item span {
    flex: 1;
    height: 11px;
    padding: 1px 3px;
    background: #999;
    border: 1px solid #a8a8a8;
}

.assigned .ink {
    left: 0;
    top: 0;
    width: 100%;
    height: 79px;
}

/* meter */
.meter {
    width: 111px;
    flex: none;
}

.meter .object {
    margin: 2px 1px 1px;
}

.meter .btn {
    width: 14px;
}

.meter select {
    width: 100%;
}

.scale {
    display: flex;
    flex-direction: column;
    flex: 1;
    min-height: 0;
    margin: 1px 1px 0;
    padding: 11px 0 0 6px;
    background: #2f2f2f;
    color: #aaa;
    overflow: hidden;
}

.scale span {
    display: flex;
    align-items: center;
    gap: 2px;
    flex: none;
    height: 23px;
    background: linear-gradient(#353535, #353535) 9px 4px / 100% 1px no-repeat, linear-gradient(#353535, #353535) 9px 18px / 100% 1px no-repeat;
}

.scale span::after {
    content: "";
    flex: 1;
    height: 1px;
    background: #404040;
}
```
